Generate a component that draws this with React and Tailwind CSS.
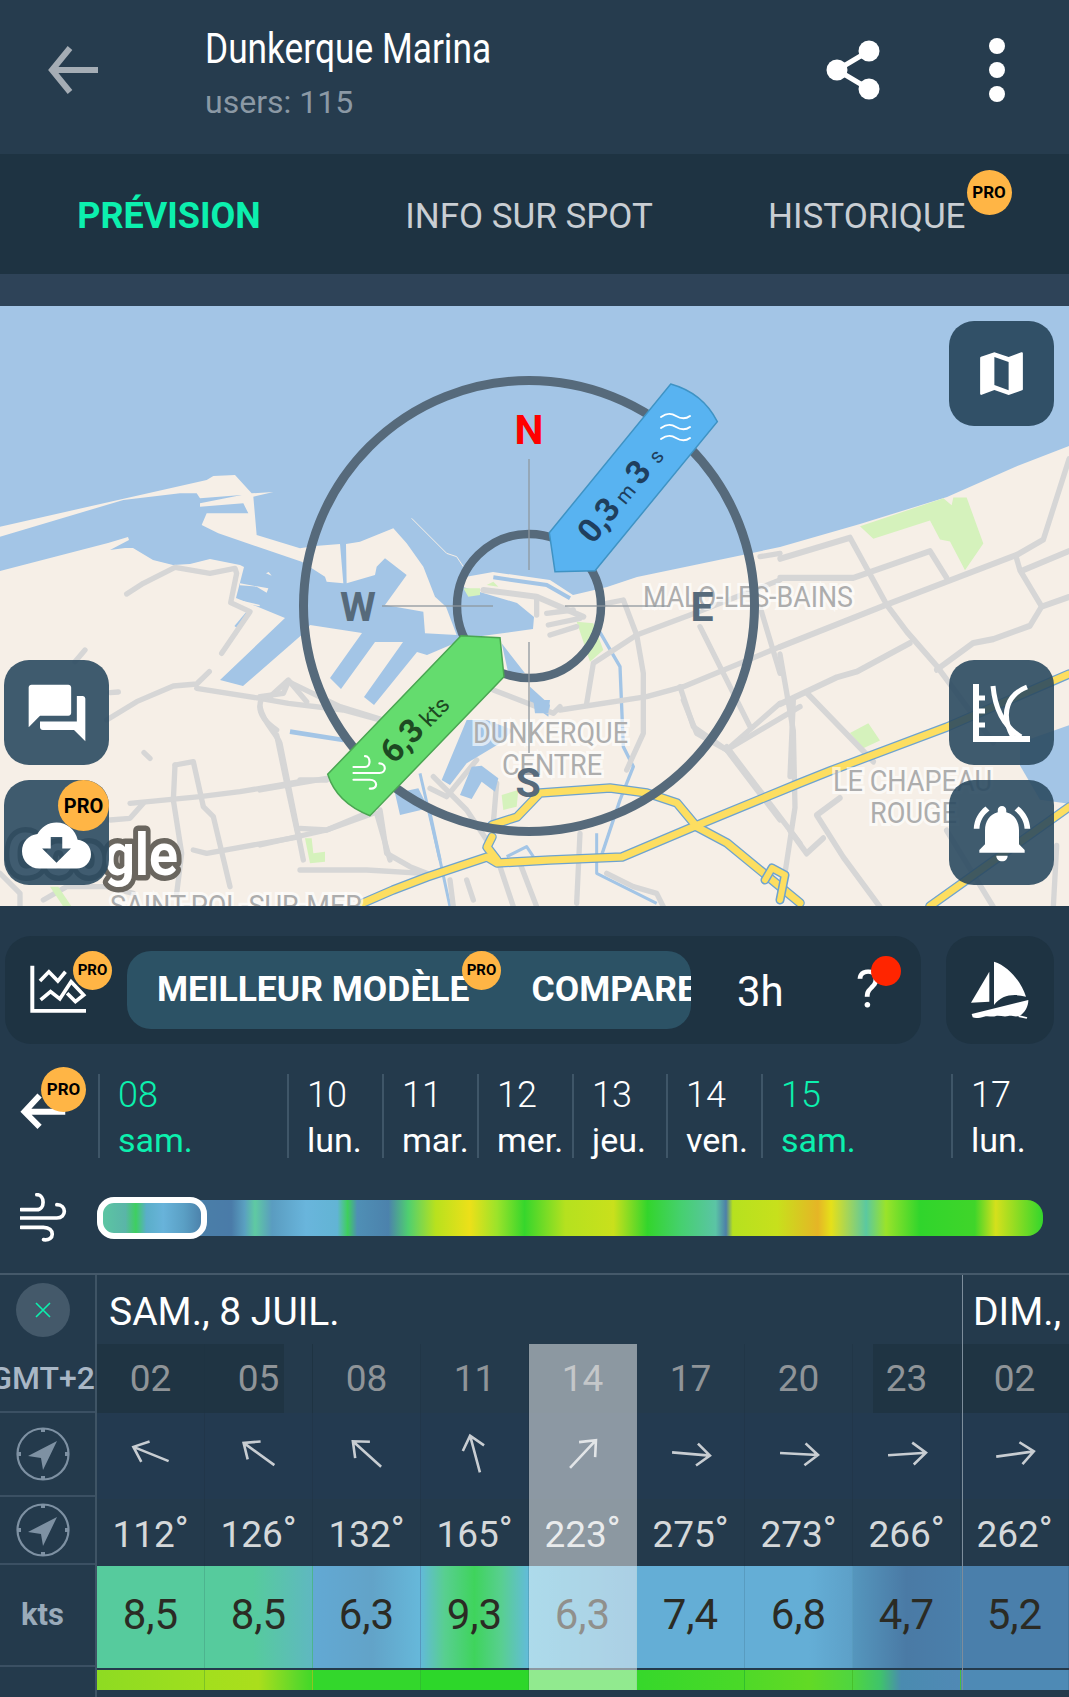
import React from "react";

const WATER = "#a3c5e6";
const LAND = "#f6efe7";
const ROAD = "#d6d6d6";
const ROAD_LINE = { fill: "none", stroke: ROAD, strokeWidth: 16, strokeLinejoin: "round", strokeLinecap: "round" };

const Pro = ({ className }) => (
  <span className={`absolute flex items-center justify-center rounded-full bg-[#ffb545] font-bold text-black ${className}`}>
    PRO
  </span>
);

const MapPicture = () => (
  <svg viewBox="0 306 1069 600" className="block h-[600px] w-[1069px]">
    <rect x="0" y="306" width="1069" height="600" fill={WATER} />
    {/* main land */}
    <path
      fill={LAND}
      d="M0 571 L108 543 L128 537 L129 540 L110 550 L125 548 L133 548 L153 560 L173 565 L190 564 L210 559 L240 565 L244 567 L236 598 L285 618 L220 680 L243 686 L305 632 L310 625 L362 633 L330 678 L341 689 L375 642 L403 642 L364 697 L374 705 L417 652 L427 655 L467 638 L533 629 L534 617 L517 603 L463 587 L465 577 L493 572 L550 580 L573 595 L607 587 L637 577 L733 557 L780 547 L860 524 L947 497 L1015 467 L1069 446 L1069 906 L0 906 Z"
    />
    <g transform="translate(0 480) scale(0.33333)">
      <path fill={LAND} d="M0 140 L620 0 L640 -12 L705 -15 L755 40 L820 36 L760 50 L770 165 L900 205 L945 198 L1020 192 L1030 310 L980 305 L975 290 L905 245 L655 160 L605 135 L620 100 L745 100 L730 70 L600 80 L600 70 L725 45 L600 55 L590 40 L540 40 L370 60 L0 170 Z" />
      <path fill={LAND} d="M720 310 L805 325 L800 338 L770 320 L720 316 Z M707 358 L780 375 L778 379 L707 364 Z M798 280 L806 276 L815 287 Z" />
      <path d="M706 440 L740 400" stroke={WATER} strokeWidth="7" fill="none" />
      <g {...ROAD_LINE}>
        <path d="M380 342 L430 310 L525 262 L630 280 L705 265 L710 280 L692 368 L750 395 L665 520" />
        <path d="M628 575 L590 612 L520 618 L410 665 L320 720" />
        <path d="M255 510 L225 545" />
        <path d="M590 625 L780 655 L865 670 L1030 690 L1140 720" />
        <path d="M785 655 C770 690 785 720 830 750" />
        <path d="M810 650 L865 600 L920 665" />
      </g>
    </g>
    <g transform="translate(0 640) scale(0.33333)">
      <g {...ROAD_LINE}>
        <path d="M330 158 L355 156" />
        <path d="M432 338 L450 355" />
        <path d="M525 375 L580 365 L610 500 L640 530 L690 740" />
        <path d="M525 375 L520 480 L545 640 L530 760" />
        <path d="M390 490 L600 470 L720 455 L900 425" />
        <path d="M330 540 L390 535 L430 490" />
        <path d="M580 630 L620 640 L900 590" />
        <path d="M830 285 L860 430 L895 590" />
        <path d="M130 780 L200 740 L320 740 L400 760" />
        <path d="M60 810 L60 760 L0 700" />
      </g>
      <path fill="#d5f2bc" d="M150 740 L190 800 L215 800 L175 740 Z" />
    </g>
    <g transform="translate(260 340) scale(0.33333)">
      <path fill={LAND} d="M258 612 L300 605 L400 565 L440 610 L490 680 L525 770 L558 800 L590 885 L495 880 L490 815 L375 795 L440 705 L375 655 L350 680 L345 705 L260 730 Z" />
      <path d="M455 535 L560 640 L590 650 L610 680" stroke={LAND} strokeWidth="3" fill="none" />
      <path d="M700 712 L860 735 L930 775" stroke={WATER} strokeWidth="12" fill="none" />
      <path fill={WATER} d="M725 910 L795 1000 L745 1000 Z M810 1040 L870 1095 L865 1130 L810 1090 Z" />
      <path fill="#d5f2bc" d="M610 745 L660 745 L660 765 L625 770 Z M680 735 L700 725 L715 740 Z M950 845 L1000 850 L1030 930 L990 965 Z M725 1365 L775 1350 L770 1400 L730 1410 Z" />
      <g fill="none" stroke={WATER} strokeWidth="10" strokeLinejoin="round">
        <path d="M1010 860 L1080 980 L1090 1220 L1120 1280 L1080 1380 L1020 1560" />
        <path d="M510 1420 L540 1560" />
      </g>
      <g {...ROAD_LINE}>
        <path strokeWidth="18" d="M670 750 L830 770 L970 830" />
        <path d="M830 770 L830 825" />
        <path d="M860 820 L940 810" />
        <path d="M865 855 L960 835" />
        <path d="M870 885 L950 860" />
        <path d="M0 1070 L70 1060 L85 1025 L240 1100 L370 1140" />
        <path d="M0 1100 C10 1150 50 1180 60 1210 L130 1560" />
        <path d="M0 1350 L200 1315" />
        <path d="M0 1515 L200 1470 L340 1420" />
        <path d="M350 1420 L390 1560" />
        <path d="M900 1110 L1160 1070 L1270 1040 L1560 920" />
        <path d="M980 1090 L1000 970 L1130 885 L1290 825 L1560 720" />
        <path d="M1040 790 L1090 780 L1130 885 L1150 1000 L1150 1180 L1100 1290" />
        <path d="M1260 1040 L1300 1160 L1400 1230 L1560 1090" />
        <path d="M1400 1230 L1560 1440" />
        <path d="M1320 860 L1470 1160" />
        <path d="M1500 800 L1560 1000" />
        <path d="M700 1050 L880 1120 L900 1100" />
        <path d="M510 1345 L560 1370 L650 1260" />
        <path d="M710 1330 L700 1450" />
        <path d="M1500 650 L1560 640" />
      </g>
    </g>
    <g transform="translate(300 700) scale(0.33333)">
      <path fill={WATER} d="M500 60 L425 240 L450 255 L500 190 L600 130 L640 90 L560 60 Z M515 200 L480 285 L515 297 L545 245 L585 275 L595 235 L545 197 Z M285 280 L300 345 L385 325 L355 265 Z M700 0 L750 0 L745 40 L705 40 Z" />
      <path fill="#d5f2bc" d="M15 415 L35 415 L40 460 L75 455 L75 485 L30 490 Z" />
      <g fill="none" stroke={WATER} strokeWidth="9" strokeLinejoin="round">
        <path strokeWidth="14" d="M-30 95 L130 120" />
        <path d="M360 220 L420 480 L450 620" />
        <path d="M890 400 L890 520 L1070 610" />
        <path d="M620 470 L680 440 L700 470" />
      </g>
      <g {...ROAD_LINE}>
        <path d="M240 330 L260 460 L330 500 L380 520" />
        <path d="M0 510 L200 510 L370 520" />
        <path d="M0 385 L80 390 L200 340" />
        <path d="M0 240 L80 240" />
        <path d="M600 500 L640 620" />
        <path d="M660 490 L710 620" />
        <path d="M840 400 L830 610" />
        <path d="M1150 0 L1190 100 L1280 150 L1500 20" />
        <path d="M1280 140 L1500 430" />
        <path d="M1480 0 L1470 230" />
        <path d="M920 520 L1000 560 L1070 580 L1090 620" />
        <path d="M450 540 L460 620" />
        <path d="M500 540 L520 600" />
        <path d="M400 230 L500 330 L560 420 L590 490" />
      </g>
    </g>
    <g transform="translate(780 310) scale(0.33333 0.3827)">
      <path fill="#d5f2bc" d="M240 565 L280 598 L450 550 L480 600 L510 605 L555 680 L610 610 L560 490 L520 490 L515 510 L490 492 Z M210 1105 L265 1080 L300 1125 L250 1145 Z" />
      <path fill={WATER} d="M720 1130 L867 1085 L867 1290 L780 1280 L720 1190 Z" />
      <g {...ROAD_LINE}>
        <path d="M0 650 L210 595 L320 770 L380 840 L470 930 L640 1130" />
        <path d="M0 700 L220 700 L450 630 L500 700" />
        <path d="M0 880 L320 770 L710 640 L790 600 L867 390" />
        <path d="M710 650 L720 680 L785 775 L867 750" />
        <path d="M730 680 L867 630" />
        <path d="M785 775 L750 825 L640 860 L580 870 L470 940" />
        <path d="M0 1030 L170 960 L230 945 L390 870" />
        <path d="M80 1000 L280 1180" />
        <path d="M0 900 L40 1100 L45 1300 L10 1500" />
        <path d="M180 1275 L110 1320 L190 1430 L300 1560" />
        <path d="M130 1380 L80 1420 L30 1360" />
        <path d="M830 1400 L820 1560" />
        <path d="M500 1360 L640 1560" />
      </g>
    </g>
    {/* motorways, blue casing under the yellow */}
    <g fill="none" strokeLinejoin="round" strokeLinecap="round">
      <g stroke="#6ea3cf" strokeWidth="9.5">
        <path d="M363 903 L393 890 L427 877 L487 857 L497 863 L550 860 L622 857 L693 827 L800 783 L830 771 L947 727 L1069 674" />
        <path d="M492 825 L517 817 L540 793 L610 788 L647 793 L677 803 L697 827 L727 843 L800 903" />
        <path d="M492 837 L487 847 L497 860" />
        <path d="M930 906 L1069 807" />
      </g>
      <g stroke="#fdde60" strokeWidth="7">
        <path d="M363 903 L393 890 L427 877 L487 857 L497 863 L550 860 L622 857 L693 827 L800 783 L830 771 L947 727 L1069 674" />
        <path d="M492 825 L517 817 L540 793 L610 788 L647 793 L677 803 L697 827 L727 843 L800 903" />
        <path d="M492 837 L487 847 L497 860" />
        <path d="M930 906 L1069 807" />
      </g>
      <path d="M765 880 L772 868 L785 875 L780 900" stroke="#6ea3cf" strokeWidth="9" />
      <path d="M765 880 L772 868 L785 875 L780 900" stroke="#fdde60" strokeWidth="6" />
    </g>
    {/* place names */}
    <g className="font-[family-name:Roboto,sans-serif]" fill="#adadad" stroke="#ffffff" strokeOpacity="0.65" strokeWidth="6" paintOrder="stroke" fontSize="29">
      <text x="643" y="607" textLength="210" lengthAdjust="spacingAndGlyphs">MALO-LES-BAINS</text>
      <text x="473" y="743" textLength="155" lengthAdjust="spacingAndGlyphs">DUNKERQUE</text>
      <text x="502" y="775" textLength="100" lengthAdjust="spacingAndGlyphs">CENTRE</text>
      <text x="833" y="791" textLength="159" lengthAdjust="spacingAndGlyphs">LE CHAPEAU</text>
      <text x="870" y="823" textLength="87" lengthAdjust="spacingAndGlyphs">ROUGE</text>
      <text x="110" y="916" textLength="252" lengthAdjust="spacingAndGlyphs">SAINT-POL-SUR-MER</text>
    </g>
    <text x="7" y="875" textLength="171" lengthAdjust="spacingAndGlyphs" fontSize="60" fontWeight="700" fill="#ffffff" stroke="#6a665f" strokeWidth="11" paintOrder="stroke" strokeLinejoin="round" className="font-[family-name:Roboto,sans-serif]">Google</text>
    {/* compass */}
    <g fill="none" stroke="#566a7b">
      <circle cx="529" cy="606" r="225.5" strokeWidth="9" />
      <circle cx="529" cy="606" r="72" strokeWidth="8.5" />
    </g>
    <g stroke="#8f989f" strokeWidth="1.5" opacity="0.85">
      <path d="M529 459 V570 M529 642 V753 M382 606 H493 M565 606 H668" />
    </g>
    <g className="font-[family-name:Roboto,sans-serif]" fontSize="41" fontWeight="700" textAnchor="middle" fill="#566a7b">
      <text x="529" y="444" fill="#ff0000">N</text>
      <text x="358" y="621">W</text>
      <text x="702" y="621">E</text>
      <text x="528" y="797">S</text>
    </g>
    <path d="M549.3 532.7 L670.7 384 Q703 393 717.3 421.7 L595 570.7 L555 571.7 Z" fill="#58b3f1" stroke="#3f93c4" strokeWidth="1.5" />
    <path d="M461 635.7 L500 637.7 L504 676.7 L370 815.7 Q336.7 803 327.7 774.3 Z" fill="#64dc6e" stroke="#4aa652" strokeWidth="1.5" />
    <g className="font-[family-name:Roboto,sans-serif]">
      <text transform="translate(593 545) rotate(-50.8)" fill="#1f3f5e" fontSize="21">
        <tspan fontSize="33" fontWeight="700">0,3</tspan>
        <tspan dx="5">m</tspan>
        <tspan dx="6" fontSize="33" fontWeight="700">3</tspan>
        <tspan dx="9">s</tspan>
      </text>
      <text transform="translate(394 765) rotate(-46)" fill="#1d4a22" fontSize="23">
        <tspan fontSize="33" fontWeight="700">6,3</tspan>
        <tspan dx="5">kts</tspan>
      </text>
    </g>
    <g fill="none" stroke="#ffffff" strokeWidth="2" strokeLinecap="round">
      <path d="M661 417 C667 413 671 413 676 416 C681 419 686 419 690 416" />
      <path d="M661 428 C667 424 671 424 676 427 C681 430 686 430 690 427" />
      <path d="M661 439 C667 435 671 435 676 438 C681 441 686 441 690 438" />
      <g transform="translate(353 755) scale(0.24) translate(-60 -790)" strokeWidth="9">
        <path d="M62 840 L110 840 C135 840 135 795 110 795" />
        <path d="M62 865 H170 C200 865 200 825 170 825" />
        <path d="M62 893 H130 C165 893 165 935 130 930" />
      </g>
    </g>
  </svg>
);

const MapButton = ({ className, children }) => (
  <div className={`absolute flex h-[105px] w-[105px] items-center justify-center rounded-[25px] bg-[#2b4a60]/90 ${className}`}>
    {children}
  </div>
);

const dates = [
  { w: "w-[189px]", n: "08", d: "sam.", green: true },
  { w: "w-[95px]", n: "10", d: "lun." },
  { w: "w-[95px]", n: "11", d: "mar." },
  { w: "w-[95px]", n: "12", d: "mer." },
  { w: "w-[94px]", n: "13", d: "jeu." },
  { w: "w-[95px]", n: "14", d: "ven." },
  { w: "w-[190px]", n: "15", d: "sam.", green: true },
  { w: "w-[117px]", n: "17", d: "lun." },
];

const forecast = [
  {
    h: "02", night: "bg-[#1f3443]", bearing: 292, deg: 112, speed: "8,5",
    speedBg: "bg-[#56cb9d]",
    barBg: "bg-[linear-gradient(90deg,#8edb22,#9fdf1e)]",
  },
  {
    h: "05", night: "bg-[linear-gradient(90deg,#1f3443_74%,#243a4c_74%)]", bearing: 306, deg: 126, speed: "8,5",
    speedBg: "bg-[linear-gradient(90deg,#56cb9d_45%,#5fb8c0)]",
    barBg: "bg-[linear-gradient(90deg,#a3df1d,#aade1c_50%,#60d82a_85%,#42d828)]",
  },
  {
    h: "08", night: "bg-[#243a4c]", bearing: 312, deg: 132, speed: "6,3",
    speedBg: "bg-[linear-gradient(90deg,#62a9d4,#62a3c8_55%,#66b8da)]",
    barBg: "bg-[#33d72c]",
  },
  {
    h: "11", night: "bg-[#243a4c]", bearing: 345, deg: 165, speed: "9,3",
    speedBg: "bg-[linear-gradient(90deg,#62bad8,#58cf90_22%,#3fd45c_50%,#58cf90_75%,#62bcd8)]",
    barBg: "bg-[#2dd72a]",
  },
  {
    h: "14", night: "bg-[#243a4c]", bearing: 43, deg: 223, speed: "6,3",
    speedBg: "bg-[linear-gradient(90deg,#62bad8,#5fa4cc)]",
    barBg: "bg-[#2dd72a]",
  },
  {
    h: "17", night: "bg-[#243a4c]", bearing: 95, deg: 275, speed: "7,4",
    speedBg: "bg-[#64aed6]",
    barBg: "bg-[linear-gradient(90deg,#36d82b,#4ad928)]",
  },
  {
    h: "20", night: "bg-[#243a4c]", bearing: 93, deg: 273, speed: "6,8",
    speedBg: "bg-[linear-gradient(90deg,#64aed6_60%,#5da0c8)]",
    barBg: "bg-[linear-gradient(90deg,#4fd928,#62da25_60%,#4fd540)]",
  },
  {
    h: "23", night: "bg-[linear-gradient(90deg,#243a4c_19%,#1f3443_19%)]", bearing: 86, deg: 266, speed: "4,7",
    speedBg: "bg-[linear-gradient(90deg,#5596bd,#4a7aa5_50%,#4a7fab)]",
    barBg: "bg-[linear-gradient(90deg,#4fd540,#3fc46a_25%,#4a8bb0_45%,#5089b5)]",
  },
  {
    h: "02", night: "bg-[#1f3443]", bearing: 82, deg: 262, speed: "5,2",
    speedBg: "bg-[#4a7fab]",
    barBg: "bg-[#4e8ab5]",
  },
];

const CompassIcon = () => (
  <svg viewBox="0 0 54 54" className="h-[54px] w-[54px]" fill="none" stroke="#7e91a3">
    <circle cx="27" cy="27" r="25.5" strokeWidth="2.2" />
    <path d="M27 1 V5 M27 49 V53 M1 27 H5 M49 27 H53" strokeWidth="4" />
    <path d="M41 14 L12 29 L25 31 L27 43 Z" fill="#7e91a3" stroke="none" />
  </svg>
);

const WindArrow = ({ bearing }) => (
  <svg viewBox="0 0 44 44" className="h-[44px] w-[44px]" style={{ transform: `rotate(${bearing}deg)` }} fill="none" stroke="#c8cdd2" strokeWidth="2.6">
    <path d="M22 41 V3 M11 16 L22 3 L33 16" />
  </svg>
);

const WIND_BAR =
  "bg-[linear-gradient(90deg,#5cc9a0_0%,#5ab5a8_3%,#3ecf60_4.1%,#5aaec8_5.2%,#68b3da_7%,#5a9fc4_9.2%,#4a7ea8_11.3%,#4a7ba8_14.2%,#5aa0c0_15.6%,#5fcaa2_16.7%,#5a9cc0_18.5%,#69b5dc_22.1%,#62b4d4_25.4%,#3ecf5c_26.5%,#4f8fb5_27.5%,#4c82ac_30.8%,#4fcf70_32.9%,#b8e11e_35.8%,#ece019_39.4%,#9be32a_42.3%,#36d62c_45.2%,#b5e11f_49.5%,#c9e01c_54.6%,#33d52c_58.2%,#46d070_61.8%,#5bc4a5_65.4%,#4d7fa8_66.5%,#b6e11f_67.2%,#c7e01c_71.9%,#e5b526_76.2%,#e5e01a_77.6%,#5bc8a0_81.3%,#9ae32a_83.4%,#30d52c_87%,#40d52a_92.8%,#d5e01c_95%,#33d62c_100%)]";

export default function App() {
  return (
    <div className="relative h-[1697px] w-[1069px] overflow-hidden bg-[#243a4c] font-[family-name:Roboto,sans-serif] text-white">
      {/* top bar */}
      <header className="flex h-[154px] items-center bg-[#263c4e] pb-[14px]">
        <div className="flex w-[205px] pl-[48px]">
          <svg viewBox="0 0 50 48" className="h-[48px] w-[50px]" fill="none" stroke="#a5adb5" strokeWidth="6">
            <path d="M50 24 H4 M22 2 L4 24 L22 46" />
          </svg>
        </div>
        <div className="flex-1 pt-[8px]">
          <div className="mt-[-3px] origin-left scale-x-[0.84] whitespace-nowrap text-[42px] leading-[50px]">Dunkerque Marina</div>
          <div className="mt-[8px] text-[32px] leading-[40px] text-[#8b99a5]">users: 115</div>
        </div>
        <svg viewBox="0 0 56 60" className="mr-[107px] h-[60px] w-[56px]" fill="#fff">
          <circle cx="43" cy="11" r="10.5" />
          <circle cx="11" cy="30" r="10.5" />
          <circle cx="43" cy="49" r="10.5" />
          <path d="M43 11 L11 30 L43 49" fill="none" stroke="#fff" strokeWidth="5" />
        </svg>
        <div className="mr-[64px] flex flex-col gap-[8px]">
          <span className="h-[16px] w-[16px] rounded-full bg-white" />
          <span className="h-[16px] w-[16px] rounded-full bg-white" />
          <span className="h-[16px] w-[16px] rounded-full bg-white" />
        </div>
      </header>

      {/* tabs */}
      <nav className="flex h-[120px] items-center bg-[#1e3342] pt-[4px] text-[35px] leading-none">
        <div className="w-[338px] text-center text-[36px] font-bold text-[#0cf0ae]">PRÉVISION</div>
        <div className="w-[382px] text-center text-[#c9ced3]">INFO SUR SPOT</div>
        <div className="relative pl-[48px] text-[#c9ced3]">
          HISTORIQUE
          <Pro className="right-[-46px] top-[-29px] h-[45px] w-[45px] text-[17px]" />
        </div>
      </nav>
      <div className="h-[32px] bg-[#2e4358]" />

      {/* map */}
      <section className="relative h-[600px] overflow-hidden">
        <MapPicture />
        <MapButton className="right-[15px] top-[15px] bg-[#2b4a60]/95">
          <svg viewBox="0 0 24 24" className="h-[57px] w-[57px]" fill="#fff">
            <path d="M20.5 3l-.16.03L15 5.1 9 3 3.36 4.9c-.21.07-.36.25-.36.48V20.5c0 .28.22.5.5.5l.16-.03L9 18.9l6 2.1 5.64-1.9c.21-.07.36-.25.36-.48V3.5c0-.28-.22-.5-.5-.5zM15 19l-6-2.11V5l6 2.11V19z" />
          </svg>
        </MapButton>
        <MapButton className="right-[15px] top-[354px]">
          <svg viewBox="0 0 57 58" className="h-[58px] w-[57px]" fill="none" stroke="#fff">
            <path d="M3 0 V55 H57" strokeWidth="6" />
            <path d="M3 14 H12 M3 27 H12 M3 41 H12" strokeWidth="5" />
            <path d="M20 2 C22 25 30 42 48 53" strokeWidth="5" />
            <path d="M54 3 C36 10 26 28 40 53" strokeWidth="5" />
          </svg>
        </MapButton>
        <MapButton className="right-[15px] top-[474px]">
          <svg viewBox="0 0 24 24" className="h-[68px] w-[68px]" fill="#fff">
            <path d="M7.58 4.08L6.15 2.65C3.75 4.48 2.17 7.3 2.03 10.5h2c.15-2.65 1.51-4.97 3.55-6.42zm12.39 6.42h2c-.15-3.2-1.73-6.02-4.12-7.85l-1.42 1.43c2.02 1.45 3.39 3.77 3.54 6.42zM18 11c0-3.07-1.64-5.64-4.5-6.32V4c0-.83-.67-1.5-1.5-1.5s-1.5.67-1.5 1.5v.68C7.63 5.36 6 7.92 6 11v5l-2 2v1h16v-1l-2-2v-5zm-6 11c.14 0 .27-.01.4-.04.65-.14 1.18-.58 1.44-1.18.1-.24.15-.5.15-.78h-4c.01 1.1.9 2 2.01 2z" />
          </svg>
        </MapButton>
        <MapButton className="left-[4px] top-[354px]">
          <svg viewBox="0 0 24 24" className="h-[68px] w-[68px]" fill="#fff">
            <path d="M21 6h-2v9H6v2c0 .55.45 1 1 1h11l4 4V7c0-.55-.45-1-1-1zm-4 6V3c0-.55-.45-1-1-1H3c-.55 0-1 .45-1 1v14l4-4h10c.55 0 1-.45 1-1z" />
          </svg>
        </MapButton>
        <MapButton className="left-[4px] top-[474px]">
          <svg viewBox="0 0 24 24" className="mt-[26px] h-[69px] w-[69px]" fill="#fff">
            <path d="M19.35 10.04C18.67 6.59 15.64 4 12 4 9.11 4 6.6 5.64 5.35 8.04 2.34 8.36 0 10.91 0 14c0 3.31 2.69 6 6 6h13c2.76 0 5-2.24 5-5 0-2.64-2.05-4.78-4.65-4.96zM17 13l-5 5-5-5h3V9h4v4h3z" />
          </svg>
          <Pro className="right-0 top-0 h-[51px] w-[51px] text-[20px]" />
        </MapButton>
      </section>

      {/* model controls */}
      <div className="flex pl-[5px] pt-[30px]">
        <div className="relative flex h-[108px] w-[916px] items-center rounded-[26px] bg-[#1e3342]">
          <svg viewBox="85 110 175 150" className="ml-[24px] h-[50px] w-[58px] shrink-0" fill="none" stroke="#fff" strokeWidth="12">
            <path d="M95 112 V248 H257" />
            <path d="M118 158 L145 130 L172 158 L195 130" strokeWidth="11" />
            <path d="M120 215 L150 190 L178 212 L212 160 L250 200 L225 220 L200 195" strokeWidth="11" />
          </svg>
          <Pro className="left-[68px] top-[15px] h-[39px] w-[39px] text-[15px]" />
          <div className="relative ml-[40px] flex h-[78px] w-[564px] shrink-0 items-center overflow-hidden rounded-[24px] bg-[#2c5265] text-[35.5px] font-bold leading-none">
            <span className="ml-[30px] shrink-0 whitespace-nowrap">MEILLEUR MODÈLE</span>
            <span className="ml-[62px] shrink-0 whitespace-nowrap">COMPARE</span>
            <Pro className="left-[335px] top-0 h-[39px] w-[39px] text-[15px]" />
          </div>
          <span className="ml-[46px] pt-[4px] text-[42px] leading-none">3h</span>
          <span className="relative ml-[72px] text-[52px] leading-none">
            ?
            <span className="absolute left-[15px] top-[-8px] h-[30px] w-[30px] rounded-full bg-[#ff2500]" />
          </span>
        </div>
        <div className="ml-[25px] flex h-[108px] w-[108px] items-center justify-center rounded-[26px] bg-[#1e3342]">
          <svg viewBox="810 90 180 180" className="h-[60px] w-[60px]" fill="#fff">
            <path d="M868 125 L868 215 L813 218 Z" />
            <path d="M882 95 C930 110 965 160 978 200 C940 190 905 195 882 225 Z" />
            <path d="M815 252 L985 210 C985 230 975 248 958 258 C945 262 935 256 925 258 C912 262 900 256 888 258 C875 262 865 256 852 260 C840 264 825 266 818 262 Z" />
            <path d="M958 256 L982 262 L980 266 L955 261 Z" />
          </svg>
        </div>
      </div>

      {/* dates */}
      <div className="relative mt-[30px] flex h-[84px] pl-[98px]">
        <svg viewBox="58 480 145 115" className="absolute left-[20px] top-[19px] h-[36px] w-[47px]" fill="none" stroke="#fff" strokeWidth="19">
          <path d="M200 540 H75 M118 488 L70 540 L118 588" />
        </svg>
        <Pro className="left-[41px] top-[-7px] h-[45px] w-[45px] text-[17px]" />
        {dates.map((item) => (
          <div
            key={item.n}
            className={`${item.w} border-l-2 border-[#3f5668] pl-[18px] leading-[45px] ${item.green ? "text-[#0cf0ae]" : "text-white"}`}
          >
            <div className="mt-[-1px] text-[36px] font-light">{item.n}</div>
            <div className="text-[34px]">{item.d}</div>
          </div>
        ))}
      </div>

      {/* wind range */}
      <div className="mt-[42px] flex h-[36px] items-center">
        <svg viewBox="60 790 140 150" className="ml-[20px] h-[50px] w-[47px] shrink-0" fill="none" stroke="#fff" strokeWidth="11" strokeLinecap="round">
          <path d="M62 840 L110 840 C135 840 135 795 110 795" />
          <path d="M62 865 H170 C200 865 200 825 170 825" />
          <path d="M62 893 H130 C165 893 165 935 130 930" />
        </svg>
        <div className={`relative ml-[30px] h-[36px] w-[946px] rounded-[16px] ${WIND_BAR}`}>
          <div className="absolute left-0 top-[-3px] h-[42px] w-[110px] rounded-[17px] border-[6px] border-white" />
        </div>
      </div>

      {/* forecast table */}
      <div className="absolute left-0 top-[1273px] flex h-[424px] w-[1069px] border-t-2 border-[#45596a]">
        <div className="w-[97px] shrink-0 border-r-2 border-[#3f5465] text-center">
          <div className="flex h-[69px] items-center justify-center pr-[10px]">
            <span className="flex h-[54px] w-[54px] items-center justify-center rounded-full bg-[#44596a]">
              <svg viewBox="0 0 16 16" className="h-[16px] w-[16px]" stroke="#0cf0ae" strokeWidth="1.6">
                <path d="M1 1 L15 15 M15 1 L1 15" />
              </svg>
            </span>
          </div>
          <div className="flex h-[69px] items-center justify-end overflow-hidden border-b-2 border-[#3b5063]">
            <span className="shrink-0 whitespace-nowrap text-[32px] font-medium leading-none text-[#a9b7c6]">GMT+2</span>
          </div>
          <div className="flex h-[84px] items-center justify-center border-b-2 border-[#3b5063] pr-[10px]">
            <CompassIcon />
          </div>
          <div className="flex h-[68px] items-center justify-center border-b-2 border-[#3b5063] pr-[10px]">
            <CompassIcon />
          </div>
          <div className="flex h-[102px] items-center justify-center border-b-2 border-[#3b5063] pr-[10px] text-[31px] font-bold text-[#9aabba]">
            kts
          </div>
        </div>
        <div className="relative flex-1">
          <div className="flex h-[69px] items-center pt-[6px] text-[39px] leading-none">
            <span className="ml-[12px] w-[864px] shrink-0">SAM., 8 JUIL.</span>
            <span className="shrink-0 whitespace-nowrap">DIM.,</span>
          </div>
          <div className="flex">
            {forecast.map((col, i) => (
              <div key={i} className="flex w-[108px] shrink-0 flex-col text-center">
                <div className={`flex h-[69px] items-center justify-center border-r border-[#1e3342]/40 text-[37px] text-[#8f9498] ${col.night}`}>{col.h}</div>
                <div className="flex h-[86px] items-center justify-center border-r border-[#1e3342]/40 bg-[#233a50] pb-[4px]">
                  <WindArrow bearing={col.bearing} />
                </div>
                <div className="flex h-[67px] items-center justify-center border-r border-[#1e3342]/40 pt-[4px] text-[37px] leading-none text-[#d5d8da]">
                  {col.deg}
                  <span className="relative top-[-5px]">°</span>
                </div>
                <div className={`flex h-[102px] items-center justify-center border-r border-[#1e3342]/15 pb-[6px] text-[42px] text-[#2b2b24] ${col.speedBg}`}>{col.speed}</div>
                <div className={`mt-[2px] h-[20px] border-r border-[#1e3342]/15 ${col.barBg}`} />
              </div>
            ))}
          </div>
          {/* selected hour */}
          <div className="absolute left-[432px] top-[69px] h-[346px] w-[108px] bg-white/48" />
          {/* day change */}
          <div className="absolute left-[865px] top-0 h-[415px] w-[1px] bg-[#7d8d9b]" />
        </div>
      </div>
    </div>
  );
}
